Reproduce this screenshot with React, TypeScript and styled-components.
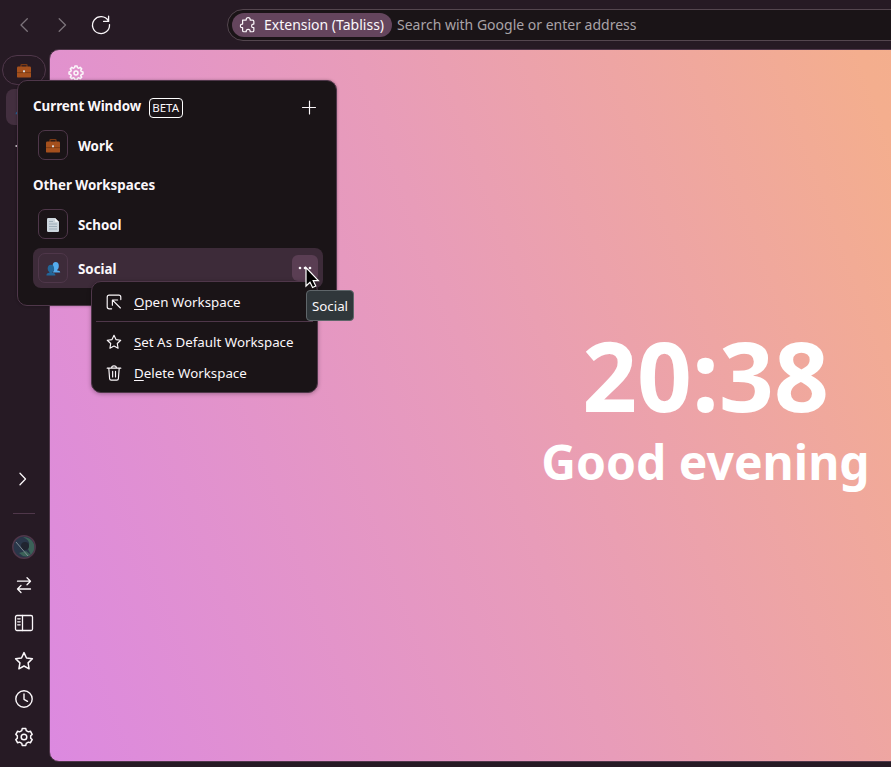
import React from "react";
import styled, { createGlobalStyle, css } from "styled-components";

const c = {
  chrome: "#261a24",
  panel: "#1a1417",
  border: "#4f374a",
  row: "#3d2b39",
  text: "#fbf7fa",
};

const GlobalStyle = createGlobalStyle`
  * { box-sizing: border-box; }
  body { margin: 0; overflow: hidden; background: ${c.chrome}; }
`;

const Browser = styled.div`
  position: relative;
  width: 891px;
  height: 767px;
  overflow: hidden;
  display: flex;
  flex-direction: column;
  background: ${c.chrome};
  color: ${c.text};
  font-family: "Noto Sans", sans-serif;
  font-size: 14px;
`;

const Toolbar = styled.header`
  flex: 0 0 49px;
  display: flex;
  align-items: center;
  padding: 1px 0 0 14px;
`;

const NavButton = styled.span<{ $dim?: boolean }>`
  width: 20px;
  height: 20px;
  margin-right: 18px;
  display: flex;
  opacity: ${(p) => (p.$dim ? 0.4 : 1)};
  svg { overflow: visible; }
`;

const AddressBar = styled.div`
  flex: 0 0 700px;
  height: 32px;
  margin-left: 99px;
  padding-left: 4px;
  display: flex;
  align-items: center;
  gap: 5px;
  border: 1px solid #54464f;
  border-radius: 16px;
  background: ${c.panel};
`;

const Chip = styled.span`
  width: 160px;
  height: 24px;
  padding-left: 7px;
  display: flex;
  align-items: center;
  gap: 7px;
  border-radius: 12px;
  background: #64455d;
  white-space: nowrap;
`;

const ChipLabel = styled.span`
  padding-bottom: 2px;
`;

const Placeholder = styled.span`
  padding-bottom: 2px;
  color: #a9a3a7;
  white-space: nowrap;
`;

const Body = styled.div`
  flex: 1;
  display: flex;
  min-height: 0;
`;

const Sidebar = styled.nav`
  flex: 0 0 49px;
  display: flex;
  flex-direction: column;
  align-items: center;
  padding: 6px 1px 0 0;
`;

const WorkspacePill = styled.div`
  width: 44px;
  height: 30px;
  padding-top: 2px;
  display: grid;
  place-items: center;
  border: 1px solid ${c.border};
  border-radius: 15px;
`;

const PinnedTab = styled.div`
  width: 36px;
  height: 36px;
  margin-top: 4px;
  padding-right: 3px;
  display: grid;
  place-items: center;
  border-radius: 8px;
  background: #432f3f;
`;

const NewTab = styled.div`
  height: 20px;
  margin-top: 11px;
`;

const SidebarTools = styled.div`
  margin-top: auto;
  padding-bottom: 20px;
  display: flex;
  flex-direction: column;
  align-items: center;
  gap: 18px;
  svg { display: block; }
`;

const Divider = styled.hr`
  width: 22px;
  height: 1px;
  margin: 6px 0 5px;
  border: 0;
  background: ${c.border};
`;

const Avatar = styled.span`
  display: flex;
  margin: -2px 0;
`;

const Page = styled.main`
  flex: 0 0 1313px;
  height: 713px;
  position: relative;
  display: flex;
  flex-direction: column;
  align-items: center;
  justify-content: center;
  border: 1px solid ${c.border};
  border-radius: 10px;
  background: linear-gradient(70deg, #dc89e0 0%, #e89cb9 36%, #f4ae8e 68%, #f6b483 100%);
  color: #fff;
  font-weight: 700;
`;

const PageSettings = styled.span`
  position: absolute;
  left: 17.5px;
  top: 14.5px;
  display: flex;
`;

const Clock = styled.div`
  font-size: 96px;
  line-height: 116px;
`;

const Greeting = styled.div`
  font-size: 48px;
  line-height: 57px;
  margin-bottom: 4px;
`;

const floating = css`
  position: absolute;
  border: 1px solid ${c.border};
  border-radius: 10px;
  background: ${c.panel};
`;

const WorkspacePopup = styled.section`
  ${floating}
  left: 17px;
  top: 80px;
  width: 320px;
  height: 226px;
  padding: 8px 13px 0 15px;
  box-shadow: 0 0 3px rgba(0, 0, 0, 0.3);
`;

const PopupHeading = styled.h2`
  height: 36px;
  margin: 0;
  padding-bottom: 2px;
  display: flex;
  align-items: center;
  font-size: 13.33px;
  line-height: 18px;
  font-weight: 700;
  & > svg { margin-left: auto; margin-right: 4px; }
`;

const SectionHeading = styled.h2`
  height: 39px;
  margin: 0;
  display: flex;
  align-items: center;
  font-size: 13.33px;
  font-weight: 700;
`;

const Beta = styled.span`
  width: 34px;
  height: 20px;
  margin: 4px 0 0 8px;
  padding-left: 2px;
  border: 1px solid #fff;
  border-radius: 4px;
  font-size: 11.5px;
  line-height: 18px;
  font-weight: 400;
`;

const WorkspaceRow = styled.div<{ $active?: boolean }>`
  width: 290px;
  height: 40px;
  margin-bottom: ${(p) => (p.$active ? 0 : 4)}px;
  padding: 0 5px;
  display: flex;
  align-items: center;
  gap: 10px;
  border-radius: 8px;
  background: ${(p) => (p.$active ? c.row : "transparent")};
  font-weight: 700;
  font-size: 13.33px;
  & + h2 { margin-top: -4px; }
`;

const RowLabel = styled.span`
  padding-top: 2px;
`;

const IconTile = styled.span`
  width: 30px;
  height: 30px;
  padding-top: 1px;
  display: grid;
  place-items: center;
  border: 1px solid ${c.border};
  border-radius: 7px;
`;

const MoreButton = styled.span`
  width: 26px;
  height: 26px;
  margin-left: auto;
  display: grid;
  place-items: center;
  border-radius: 6px;
  background: #5a3e53;
`;

const ContextMenu = styled.ul`
  ${floating}
  left: 91px;
  top: 281px;
  width: 227px;
  height: 112px;
  margin: 0;
  padding: 4px;
  list-style: none;
  font-size: 13.33px;
  box-shadow: 0 1px 4px rgba(0, 0, 0, 0.3);
`;

const MenuItem = styled.li`
  height: 31px;
  padding-left: 10px;
  display: flex;
  align-items: center;
  gap: 12px;
  white-space: nowrap;
`;

const MenuRule = styled.li`
  height: 1px;
  margin: 4px 0;
  background: ${c.border};
`;

const AccessKey = styled.span`
  text-decoration: underline;
  text-underline-offset: 2px;
  text-decoration-thickness: 1px;
`;

const Tooltip = styled.div`
  position: absolute;
  left: 306px;
  top: 290px;
  width: 48px;
  height: 31px;
  display: grid;
  place-items: center;
  border: 1px solid #5f666a;
  border-radius: 4px;
  background: #30373b;
  font-size: 13.33px;
`;

const Pointer = styled.svg`
  position: absolute;
  left: 304px;
  top: 266px;
`;

type IconProps = { size?: number; width?: number; children: React.ReactNode };
const Icon = ({ size = 20, width = 1.3, children }: IconProps) => (
  <svg width={size} height={size} viewBox="0 0 20 20" fill="none" stroke={c.text}
    strokeWidth={width} strokeLinecap="round" strokeLinejoin="round">
    {children}
  </svg>
);

const gear = (teeth: number, outer: number, inner: number) => {
  const pts: string[] = [];
  const step = (Math.PI * 2) / teeth;
  for (let i = 0; i < teeth; i++) {
    const a = i * step - Math.PI / 2;
    [[-0.2, outer], [0.2, outer], [0.32, inner], [0.68, inner]].forEach(([t, r]) =>
      pts.push(`${(10 + r * Math.cos(a + t * step)).toFixed(2)} ${(10 + r * Math.sin(a + t * step)).toFixed(2)}`));
  }
  return `M${pts.join("L")}Z`;
};

const STAR = "M10 1.6 12.5 7l5.9.8-4.3 4.1 1 5.9L10 15l-5.1 2.8 1-5.9L1.6 7.8 7.5 7Z";

const Briefcase = () => (
  <svg width="14" height="14" viewBox="0 0 14 14">
    <path d="M4 3.5V1.2Q4 .6 4.6.6h4.8q.6 0 .6.6v2.3" fill="none" stroke="#7b3a14" strokeWidth="1.2" />
    <rect y="2.6" width="14" height="11" rx="1.2" fill="#a5501d" />
    <path d="M0 8.6h14" stroke="#7b3a14" strokeWidth=".9" />
    <rect x="6" y="6.3" width="2" height="2" rx=".5" fill="#d9dde0" />
  </svg>
);

const Document = () => (
  <svg width="14" height="16" viewBox="0 0 14 16">
    <path d="M1 2.2Q1 1 2.2 1H9l4 4v8.8q0 1.2-1.2 1.2H2.2Q1 15 1 13.8Z" fill="#ccd6dd" />
    <path d="M9 1v3q0 1 1 1h3Z" fill="#f0f3f5" />
    <path d="M3 4.5h4M3 7h8M3 9.5h8M3 12h8" stroke="#99aab5" strokeWidth=".9" />
  </svg>
);

const People = ({ size = 16 }: { size?: number }) => (
  <svg width={size} height={size} viewBox="0 0 16 16">
    <ellipse cx="10.7" cy="4.9" rx="3.1" ry="3.9" fill="#55acee" />
    <path d="M9.4 8h2.8v1.4q3 .2 3 2H7.8Z" fill="#55acee" />
    <ellipse cx="5.9" cy="7.5" rx="3.2" ry="3.8" fill="#226699" />
    <path d="M4.4 10h3v1.8q3 .1 3 2.6H1.4q0-2.5 3-2.6Z" fill="#226699" />
  </svg>
);

export default function App() {
  return (
    <Browser>
      <GlobalStyle />
      <Toolbar>
        <NavButton $dim><Icon><path d="M13.3 3.8 7 10l6.3 6.2" /></Icon></NavButton>
        <NavButton $dim><Icon><path d="M7.2 3.8 13.5 10l-6.3 6.2" /></Icon></NavButton>
        <NavButton>
          <Icon><path d="M19.5 9.6A8.5 8.5 0 1 1 18.3 5.7M18.6 1.2v5.2h-5" /></Icon>
        </NavButton>
        <AddressBar>
          <Chip>
            <Icon size={18} width={1.35}>
              <path d="M4 4.5h4V4a2.2 2.2 0 0 1 4.4 0v.5H15q1.5 0 1.5 1.5v3H16a2 2 0 0 0 0 4h.5v3q0 1.5-1.5 1.5h-2.6V17a2.2 2.2 0 0 0-4.4 0v.5H5.5Q4 17.5 4 16v-3H3.5a2 2 0 0 1 0-4H4Z" />
            </Icon>
            <ChipLabel>Extension (Tabliss)</ChipLabel>
          </Chip>
          <Placeholder>Search with Google or enter address</Placeholder>
        </AddressBar>
      </Toolbar>

      <Body>
        <Sidebar>
          <WorkspacePill><Briefcase /></WorkspacePill>
          <PinnedTab><People size={18} /></PinnedTab>
          <NewTab><Icon><path d="M2 10h16M10 2v16" /></Icon></NewTab>
          <SidebarTools>
            <Icon><path d="M6 4.3 11.5 10l-5.500 5.700" /></Icon>
            <Divider />
            <Avatar>
              <svg width="24" height="24" viewBox="0 0 24 24">
                <circle cx="12" cy="12" r="11" fill="#293649" />
                <path d="M11 2q7 3 6 8l-1 4 3 6Q24 15 22 9 19 2 11 2ZM7 18l7-2 5 4q-6 4-12-2Z" fill="#3b6258" />
                <circle cx="13" cy="11" r="4" fill="#202530" />
                <path d="m4 7 12 14" stroke="#7f8b93" />
                <circle cx="12" cy="12" r="11.2" fill="none" stroke={c.border} strokeWidth="1.5" />
              </svg>
            </Avatar>
            <Icon><path d="M3.5 6.2h13M13 2.7l3.5 3.5L13 9.7M16.5 14h-13M7 10.5 3.5 14 7 17.5" /></Icon>
            <Icon><rect x="1.5" y="2.5" width="17" height="15" rx="1.5" /><path d="M8.5 2.5v15M3.7 5.8h2.5M3.7 8.8h2.5M3.7 11.8h2.5" /></Icon>
            <Icon width={1.5}><path d={STAR} /></Icon>
            <Icon width={1.4}><circle cx="10" cy="10" r="8.2" /><path d="M10 5v5.3l3.5 2" /></Icon>
            <Icon width={1.5}><path d={gear(6, 8.6, 6.8)} /><circle cx="10" cy="10" r="2.8" /></Icon>
          </SidebarTools>
        </Sidebar>

        <Page>
          <PageSettings>
            <Icon size={16} width={1.9}><path d={gear(8, 8.8, 6.9)} /><circle cx="10" cy="10" r="2.5" /></Icon>
          </PageSettings>
          <Clock>20:38</Clock>
          <Greeting>Good evening</Greeting>
        </Page>
      </Body>

      <WorkspacePopup>
        <PopupHeading>
          Current Window<Beta>BETA</Beta>
          <Icon width={1.15}><path d="M3.5 11.5h13M10.5 5v13" /></Icon>
        </PopupHeading>
        <WorkspaceRow><IconTile><Briefcase /></IconTile><RowLabel>Work</RowLabel></WorkspaceRow>
        <SectionHeading>Other Workspaces</SectionHeading>
        <WorkspaceRow><IconTile><Document /></IconTile><RowLabel>School</RowLabel></WorkspaceRow>
        <WorkspaceRow $active>
          <IconTile><People /></IconTile><RowLabel>Social</RowLabel>
          <MoreButton>
            <svg width="14" height="4" viewBox="0 0 14 4" fill={c.text}>
              <circle cx="2" cy="2" r="1.3" /><circle cx="7" cy="2" r="1.3" /><circle cx="12" cy="2" r="1.3" />
            </svg>
          </MoreButton>
        </WorkspaceRow>
      </WorkspacePopup>

      <ContextMenu>
        <MenuItem>
          <Icon size={16} width={1.45}><path d="M7 18.5H4Q1.5 18.5 1.5 16V4Q1.5 1.5 4 1.5h12q2.5 0 2.5 2.5v3M8 14V7.5h6.5M8.5 8l9.5 9.5" /></Icon>
          <span><AccessKey>O</AccessKey>pen Workspace</span>
        </MenuItem>
        <MenuRule />
        <MenuItem>
          <Icon size={16} width={1.45}><path d={STAR} /></Icon>
          <span><AccessKey>S</AccessKey>et As Default Workspace</span>
        </MenuItem>
        <MenuItem>
          <Icon size={16} width={1.45}><path d="M1.5 4h17M7 4V3.5Q7 1 10 1t3 2.5V4M3.5 4l1 13q.1 2 2 2h7q1.9 0 2-2l1-13M8.3 8v7M11.9 8v7" /></Icon>
          <span><AccessKey>D</AccessKey>elete Workspace</span>
        </MenuItem>
      </ContextMenu>

      <Tooltip>Social</Tooltip>
      <Pointer width="16" height="24" viewBox="0 0 16 24">
        <path d="M2 1.500V20l4-3.800 2.600 5.300 3.200-1.500-2.600-5.300h5.200Z" fill="#000" stroke="#fff" strokeWidth="1.200" />
      </Pointer>
    </Browser>
  );
}
